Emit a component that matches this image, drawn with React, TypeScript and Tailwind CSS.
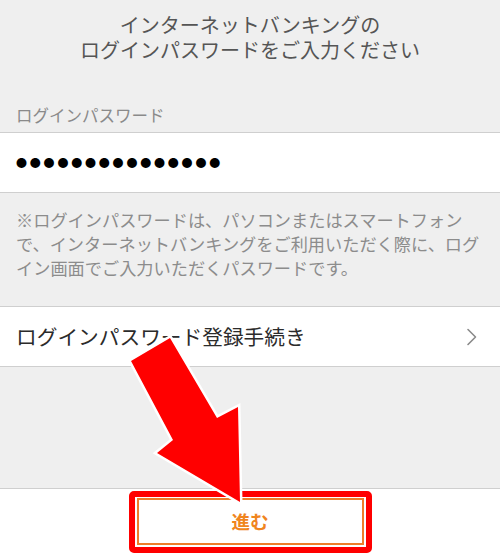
import React from 'react'

const font = { fontFamily: '"Noto Sans CJK JP", "Liberation Sans", sans-serif' }

const Chevron = () => (
  <svg width="12" height="18" viewBox="0 0 12 18" className="shrink-0">
    <polyline points="2,1.5 9.5,9 2,16.5" fill="none" stroke="#8a8a8a" strokeWidth="1.6" strokeLinecap="round" strokeLinejoin="round" />
  </svg>
)

const ArrowMark = () => {
  const pts = '131,361 170,338 217,418 238,407 240,502 157,453 173,440'
  return (
    <svg width="500" height="556" viewBox="0 0 500 556" className="absolute left-0 top-0 pointer-events-none">
      <polygon points={pts} fill="#ffffff" stroke="#ffffff" strokeWidth="5" strokeLinejoin="miter" />
      <polygon points={pts} fill="#ff0000" />
    </svg>
  )
}

export default function App() {
  return (
    <div className="relative w-[500px] h-[556px] overflow-hidden bg-[#efefef]" style={font}>
      <div className="pt-[12px] text-center text-[20px] leading-[25px] text-[#555555]">
        <p>インターネットバンキングの</p>
        <p>ログインパスワードをご入力ください</p>
      </div>

      <div className="px-4 pt-[43px] pb-[7px] text-[16.5px] leading-[20px] text-[#8a8a8a]">
        ログインパスワード
      </div>

      <div className="flex h-[61px] items-center border-y border-[#cfcfcf] bg-white px-4">
        <span className="text-[11px] leading-none tracking-[2.8px] text-black" style={font}>
          ●●●●●●●●●●●●●●●
        </span>
      </div>

      <div className="px-4 pt-[15px] pb-[26px] text-[17.2px] leading-[24px] text-[#8c8c8c] whitespace-nowrap">
        ※ログインパスワードは、パソコンまたはスマートフォン
        <br />
        で、インターネットバンキングをご利用いただく際に、ログ
        <br />
        イン画面でご入力いただくパスワードです。
      </div>

      <div className="flex h-[61px] items-center justify-between border-y border-[#cfcfcf] bg-white pl-4 pr-[22px]">
        <span className="text-[20.7px] text-[#2b2b2b]">ログインパスワード登録手続き</span>
        <Chevron />
      </div>

      <div className="h-[122px] border-b border-[#cfcfcf]" />

      <div className="h-[67px] bg-white pt-[9px]">
        <button className="mx-auto flex h-[47px] w-[227px] items-center justify-center border-2 border-[#ee7d2a] bg-white text-[18.5px] font-bold text-[#f0851e]">
          進む
        </button>
      </div>

      {/* annotation overlay */}
      <div className="absolute left-[129px] top-[491px] h-[62px] w-[243px] rounded-[5px] border-[6px] border-[#ff0000]" />
      <ArrowMark />
    </div>
  )
}
